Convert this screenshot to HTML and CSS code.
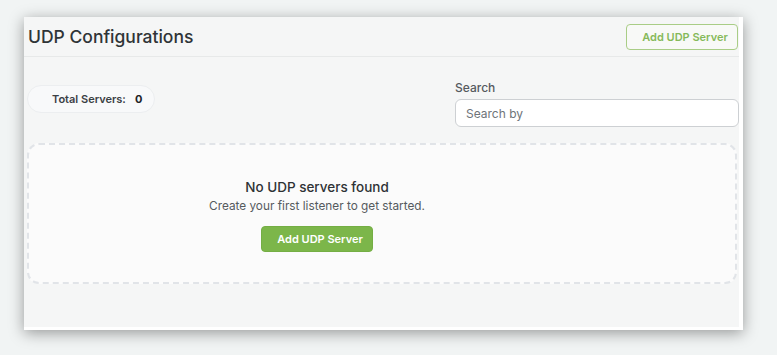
FILE: index.html
```html
<!DOCTYPE html>
<html lang="en">
<head>
  <meta charset="UTF-8">
  <meta name="viewport" content="width=device-width, initial-scale=1.0">
  <title>UDP Configurations</title>
  <link rel="stylesheet" href="styles.css">
</head>
<body>
  <div class="window">
    <div class="page-header">
      <h1>UDP Configurations</h1>
      <button class="btn btn-outline">Add UDP Server</button>
    </div>

    <div class="toolbar">
      <div class="stat-pill">
        <span class="stat-label">Total Servers:</span>
        <span class="stat-value">0</span>
      </div>
      <div class="search-block">
        <label for="search">Search</label>
        <input id="search" type="text" placeholder="Search by">
      </div>
    </div>

    <div class="empty-state">
      <div class="empty-inner">
        <h2>No UDP servers found</h2>
        <p>Create your first listener to get started.</p>
        <button class="btn btn-solid">Add UDP Server</button>
      </div>
    </div>
  </div>
</body>
</html>
```

FILE: styles.css
```css
body {
  margin: 0;
  font-family: 'Inter', 'Noto Sans', sans-serif;
  background: #f1f4f4;
  height: 355px;
  overflow: hidden;
}
.window {
  margin: 17px 0 0 24px;
  width: 715px;
  height: 310px;
  background: #f5f6f6;
  border-right: 4px solid #ffffff;
  border-bottom: 3px solid #ffffff;
  box-shadow: 0 3px 14px rgba(0,0,0,0.38);
  overflow: hidden;
}
.page-header {
  display: flex;
  justify-content: space-between;
  align-items: center;
  height: 39px;
  padding: 0 1px 0 4px;
  border-bottom: 1px solid #e7e9e9;
}
h1 {
  margin: 0;
  font-size: 17.5px;
  font-weight: 500;
  color: #2f3437;
}
.btn {
  font-family: inherit;
  font-size: 11px;
  font-weight: 600;
  height: 26px;
  border-radius: 4px;
  cursor: pointer;
}
.btn-outline {
  width: 112px;
  margin-top: 1px;
  background: #f8f9f7;
  border: 1px solid #a9cd86;
  color: #86b95a;
  padding: 0 0 0 6px;
}
.toolbar {
  display: flex;
  align-items: flex-start;
  padding: 24px 0 0 3px;
  height: 62px;
}
.stat-pill {
  flex-shrink: 0;
  white-space: nowrap;
  box-sizing: border-box;
  display: flex;
  align-items: center;
  gap: 9px;
  width: 128px;
  height: 28px;
  margin-top: 4px;
  padding: 0 0 0 24px;
  background: #f8f9fa;
  border: 1px solid #eceef0;
  border-radius: 14px;
  font-size: 11px;
  font-weight: 600;
  color: #3b4045;
}
.stat-value {
  color: #1f2326;
  font-weight: 700;
}
.search-block {
  flex-shrink: 0;
  margin-left: 300px;
  width: 284px;
  display: flex;
  flex-direction: column;
}
.search-block label {
  font-size: 12px;
  font-weight: 500;
  color: #555a5e;
  height: 18px;
  line-height: 14px;
}
.search-block input {
  box-sizing: border-box;
  width: 100%;
  height: 28px;
  padding: 0 10px;
  border: 1px solid #cdd0d3;
  border-radius: 6px;
  background: #ffffff;
  font-family: inherit;
  font-size: 12px;
  color: #333;
}
.search-block input::placeholder {
  color: #6e7479;
}
.empty-state {
  margin-left: 3px;
  width: 706px;
  height: 137px;
  border: 2px dashed #e1e4e8;
  border-radius: 12px;
  background: #fbfbfb;
}
.empty-inner {
  width: 576px;
  text-align: center;
  padding-top: 34px;
}
.empty-inner h2 {
  margin: 0;
  font-size: 13.5px;
  font-weight: 500;
  color: #2e3235;
}
.empty-inner p {
  margin: 4px 0 13px;
  font-size: 11.8px;
  color: #555a5e;
}
.btn-solid {
  width: 112px;
  background: #7cb64a;
  border: 1px solid #74ae44;
  color: #ffffff;
  padding: 0 0 0 6px;
}
```
